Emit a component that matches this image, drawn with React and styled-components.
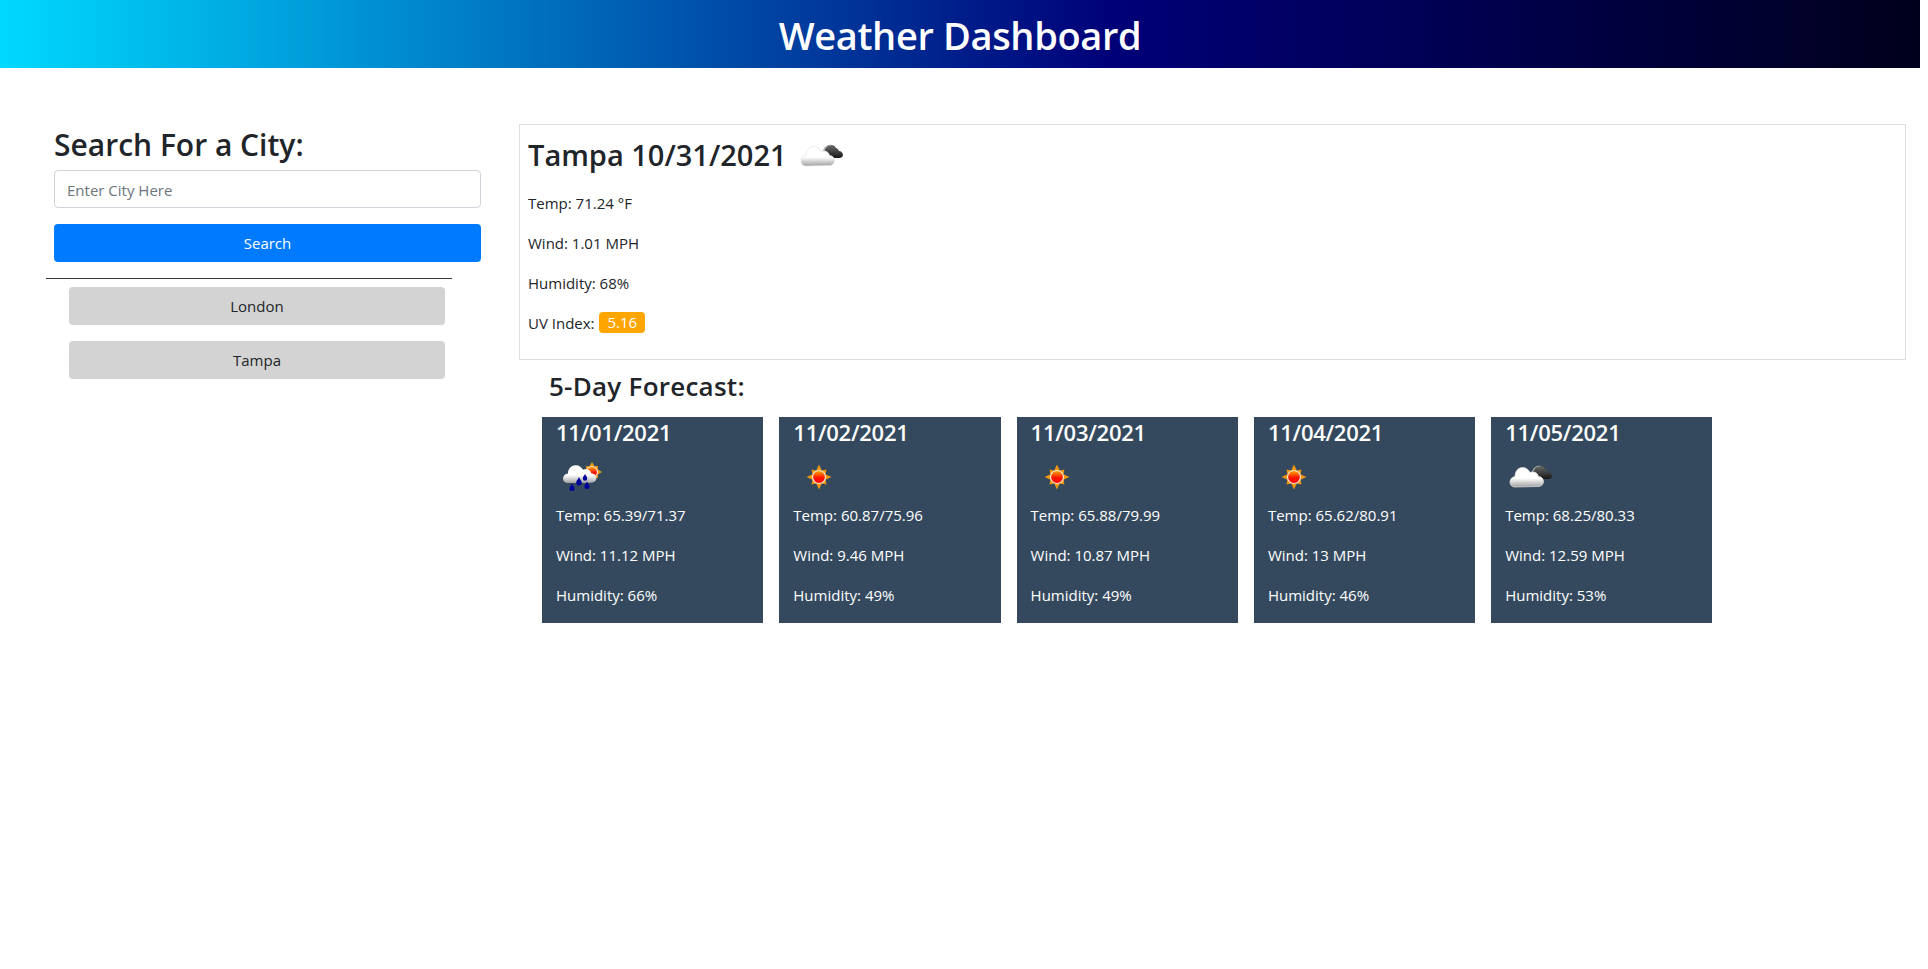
import React from "react";
import styled, { createGlobalStyle } from "styled-components";

const Global = createGlobalStyle`
  * { box-sizing: border-box; }
  html, body { margin: 0; background: #fff; }
  body { font-family: "Open Sans", "Noto Sans", "Liberation Sans", sans-serif; font-size: 15px; line-height: 24px; color: #212529; }
`;
const Header = styled.header`
  width: 1920px; height: 68px; padding-top: 2px; display: flex; align-items: center; justify-content: center;
  background: linear-gradient(to right, #00d9ff 0%, #000078 58%, #00001c 100%);
`;
const Title = styled.h1`
  margin: 0; color: #fff; font-size: 38px; font-weight: 600; line-height: 1; letter-spacing: -0.35px;
`;
const Main = styled.main`
  display: flex; align-items: flex-start; padding: 56px 22px 0 46px;
`;
const Sidebar = styled.aside`width: 473px; flex: none;`;
const SearchForm = styled.form`display: flex; flex-direction: column; margin-left: 8px; width: 427px;`;
const SearchHeading = styled.h2`
  margin: 0 0 8px; padding-top: 3px; height: 38px; font-size: 30px; font-weight: 600; line-height: 36px; color: #212529; letter-spacing: 0;
`;
const CityInput = styled.input`
  height: 38px; padding: 7px 12px 5px; border: 1px solid #ced4da; border-radius: 4px; font: inherit; margin-bottom: 16px; color: #495057;
  &::placeholder { color: #6c757d; opacity: 1; }
`;
const SearchButton = styled.button`
  height: 38px; border: 0; border-radius: 4px; background: #007bff; color: #fff; font: inherit;
`;
const Divider = styled.hr`
  width: 406px; height: 1px; margin: 16px 0 8px; border: 0; background: #343a40;
`;
const History = styled.div`display: flex; flex-direction: column; gap: 16px; margin-left: 23px; width: 376px;`;
const HistoryButton = styled.button`
  height: 38px; border: 0; border-radius: 4px; background: #d3d3d3; color: #212529; font: inherit;
`;
const Content = styled.section`flex: 1; min-width: 0;`;
const Current = styled.div`
  height: 236px; border: 1px solid rgba(0,0,0,.125); padding: 8px;
`;
const CurrentTitle = styled.h2`
  margin: 0 0 8px; height: 50px; padding-bottom: 7px; display: flex; align-items: center; gap: 10px;
  font-size: 29px; font-weight: 600; line-height: 36px; letter-spacing: 0;
`;
const Stat = styled.p`margin: 0 0 16px; color: ${p => p.$light ? "#fff" : "#212529"};`;
const Badge = styled.span`
  display: inline-block; height: 21px; line-height: 21px; padding: 0 8px; margin-left: 1px; border-radius: 4px; background: orange; color: #fff; vertical-align: 1px;
`;
const ForecastTitle = styled.h3`
  margin: 9px 0 14px 30px; font-size: 26px; font-weight: 600; line-height: 34px; letter-spacing: 0.25px;
`;
const Cards = styled.div`display: flex; gap: 16px; margin-left: 23px;`;
const Card = styled.article`
  width: 221.3px; height: 206px; background: #34495e; color: #fff; padding: 0 14px;
`;
const CardDate = styled.h4`margin: 0; font-size: 22px; font-weight: 600; line-height: 31px; letter-spacing: -0.25px;`;
const IconSlot = styled.div`height: 50px; margin: 3px 0 2px 1px;`;

const Defs = () => (
  <svg width="0" height="0" style={{ position: "absolute" }}>
    <defs>
      <linearGradient id="cw" x1="0" y1="0" x2="0" y2="1">
        <stop offset="0" stopColor="#fff" /><stop offset=".55" stopColor="#fff" /><stop offset="1" stopColor="#a0a0a0" />
      </linearGradient>
      <linearGradient id="cd" x1="0" y1="0" x2="0" y2="1">
        <stop offset="0" stopColor="#6a6a6a" /><stop offset="1" stopColor="#181818" />
      </linearGradient>
      <linearGradient id="sg" x1="0" y1="0" x2="0" y2="1">
        <stop offset="0" stopColor="#ffb000" /><stop offset=".55" stopColor="#ff1500" /><stop offset="1" stopColor="#f00" />
      </linearGradient>
    </defs>
  </svg>
);

const CLOUD = "M9 36c-3 0-5-2-5-5 0-3 2-5 5-5.5 0-5 3-9 7.5-9 3.5 0 6 2 7.5 5 1-.5 2-.5 3-.5 3 0 5 2 5.5 4.5 3 0 5 2.5 5 5s-2 5-5 5z";

const Sun = ({ cx = 25, cy = 26, r = 6.5, long = 12.5, short = 10.5 }) => {
  const rays = [0, 45, 90, 135, 180, 225, 270, 315];
  return (
    <g>
      {rays.map(a => (
        <polygon key={a} points={`${cx - 2.8},${cy - r} ${cx},${cy - (a % 90 ? short : long)} ${cx + 2.8},${cy - r}`} fill="#f0960f" transform={`rotate(${a} ${cx} ${cy})`} />
      ))}
      <circle cx={cx} cy={cy} r={r} fill="url(#sg)" stroke="#ffeacc" strokeWidth="1.2" />
    </g>
  );
};
const Drop = ({ x, y, s = 1 }) => (
  <path d={`M${x} ${y - 5 * s}c${1 * s} ${2.5 * s} ${2.8 * s} ${3.5 * s} ${2.8 * s} ${5.6 * s}a${2.8 * s} ${2.8 * s} 0 0 1 ${-5.6 * s} 0c0 ${-2.1 * s} ${1.8 * s} ${-3.1 * s} ${2.8 * s} ${-5.6 * s}z`} fill="#00009c" />
);
const Clouds = () => (
  <svg width="50" height="50" viewBox="0 0 50 50">
    <path d="M27 24c0-5 3-9 7-9 3 0 4 1 5 3 1 0 2 1 3 3 2 0 4 2 4 4 0 2-2 3-4 3H33z" fill="url(#cd)" />
    <path d="M26 24c0-5 3-9 8-9" fill="none" stroke="#aaa" strokeWidth="1.2" />
    <path d={CLOUD} fill="url(#cw)" stroke="#e2e2e2" strokeWidth=".7" />
  </svg>
);
const SunIcon = () => (
  <svg width="50" height="50" viewBox="0 0 50 50"><Sun /></svg>
);
const Rain = () => (
  <svg width="50" height="50" viewBox="0 0 50 50">
    <Sun cx={35} cy={21} r={5.5} long={10} short={8.5} />
    <path d={CLOUD} fill="url(#cw)" transform="translate(2 -1) scale(1 .92)" />
    <Drop x={22} y={31} /><Drop x={28} y={27} s={.8} /><Drop x={15} y={37} s={.9} /><Drop x={30} y={35} s={.9} />
  </svg>
);

const days = [
  ["11/01/2021", Rain, "65.39/71.37", "11.12", "66"],
  ["11/02/2021", SunIcon, "60.87/75.96", "9.46", "49"],
  ["11/03/2021", SunIcon, "65.88/79.99", "10.87", "49"],
  ["11/04/2021", SunIcon, "65.62/80.91", "13", "46"],
  ["11/05/2021", Clouds, "68.25/80.33", "12.59", "53"],
];

export default function App() {
  return (
    <>
      <Global />
      <Defs />
      <Header><Title>Weather Dashboard</Title></Header>
      <Main>
        <Sidebar>
          <SearchForm onSubmit={e => e.preventDefault()}>
            <SearchHeading>Search For a City:</SearchHeading>
            <CityInput placeholder="Enter City Here" />
            <SearchButton>Search</SearchButton>
          </SearchForm>
          <Divider />
          <History>
            <HistoryButton>London</HistoryButton>
            <HistoryButton>Tampa</HistoryButton>
          </History>
        </Sidebar>
        <Content>
          <Current>
            <CurrentTitle>Tampa 10/31/2021 <Clouds /></CurrentTitle>
            <Stat>Temp: 71.24 °F</Stat>
            <Stat>Wind: 1.01 MPH</Stat>
            <Stat>Humidity: 68%</Stat>
            <Stat>UV Index: <Badge>5.16</Badge></Stat>
          </Current>
          <ForecastTitle>5-Day Forecast:</ForecastTitle>
          <Cards>
            {days.map(([d, Icon, t, w, h]) => (
              <Card key={d}>
                <CardDate>{d}</CardDate>
                <IconSlot><Icon /></IconSlot>
                <Stat $light>Temp: {t}</Stat>
                <Stat $light>Wind: {w} MPH</Stat>
                <Stat $light>Humidity: {h}%</Stat>
              </Card>
            ))}
          </Cards>
        </Content>
      </Main>
    </>
  );
}
